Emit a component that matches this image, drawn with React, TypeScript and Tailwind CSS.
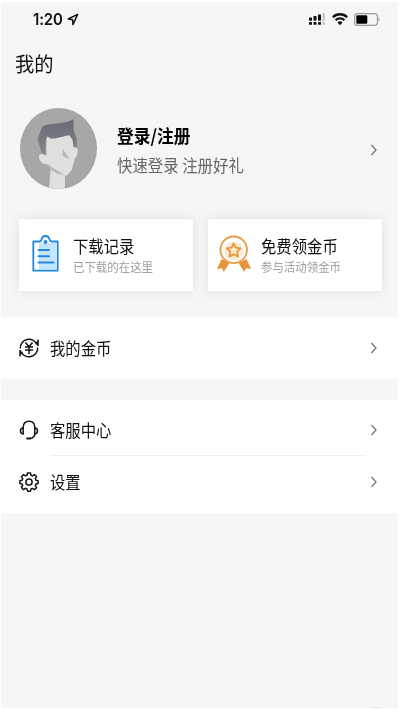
import type { ReactNode } from "react"

function Chevron() {
  return (
    <svg className="h-3 w-2 shrink-0" viewBox="0 0 8 12" fill="none" stroke="#777" strokeWidth="1.3">
      <path d="M1.4 1 6 6 1.4 11" />
    </svg>
  )
}

function StatusBar() {
  return (
    <div className="flex h-[34px] items-center justify-between pr-[18px] pl-8">
      <div className="flex items-center">
        <span className="w-[33px] origin-left scale-x-[0.93] font-[Inter,sans-serif] text-[16px] leading-5 font-semibold tracking-[-0.1px]">
          1:20
        </span>
        <svg className="ml-[1px] h-[13px] w-3" viewBox="0 0 12 13" fill="none" stroke="#111" strokeWidth="1.5" strokeLinejoin="round">
          <path d="M10.6 1.4 1.2 6 5.6 6.8 6 11.6Z" />
        </svg>
      </div>
      <div className="flex items-center">
        <svg className="h-3 w-[17px]" viewBox="0 0 17 12" fill="#111">
          <rect x="0" y="4.5" width="3" height="3.2" rx="0.6" />
          <rect x="4.5" y="3" width="3" height="4.7" rx="0.6" />
          <rect x="9" y="1.4" width="3" height="6.3" rx="0.6" />
          <rect x="0" y="9" width="3" height="2.8" rx="0.6" />
          <rect x="4.5" y="9" width="3" height="2.8" rx="0.6" />
          <rect x="9" y="9" width="3" height="2.8" rx="0.6" />
          <rect x="13.5" y="0" width="2.5" height="7.7" rx="0.6" fill="#c8c8c8" />
          <rect x="13.5" y="9" width="2.5" height="2.8" rx="0.6" fill="#c8c8c8" />
        </svg>
        <svg className="ml-[6px] h-3 w-4" viewBox="0 0 16 12" fill="none" stroke="#111" strokeWidth="2.3">
          <path d="M0.9 4.2a10 10 0 0 1 14.2 0" />
          <path d="M3.6 7.3a6.2 6.2 0 0 1 8.8 0" />
          <path d="M8 12.2 5.4 9.6a3.6 3.6 0 0 1 5.2 0Z" fill="#111" stroke="none" />
        </svg>
        <svg className="ml-[6px] h-[13px] w-[26px]" viewBox="0 0 26 13">
          <rect x="0.6" y="0.6" width="22.8" height="11.8" rx="3" fill="none" stroke="#999" strokeWidth="1.1" />
          <rect x="2.3" y="2.2" width="11" height="8.6" rx="1.4" fill="#000" />
          <path d="M24.4 4.3c1.6.7 1.6 3.7 0 4.4Z" fill="#999" />
        </svg>
      </div>
    </div>
  )
}

function Avatar() {
  return (
    <svg className="h-[81px] w-[77px] shrink-0" viewBox="0 0 77 81" preserveAspectRatio="none">
      <defs>
        <clipPath id="avatar">
          <ellipse cx="38.5" cy="40.5" rx="38.5" ry="40.5" />
        </clipPath>
        <linearGradient id="hair" x1="0" y1="0" x2="0" y2="1">
          <stop offset="0" stopColor="#686a71" />
          <stop offset="1" stopColor="#84868e" />
        </linearGradient>
        <filter id="grain" x="0" y="0" width="1" height="1">
          <feTurbulence type="fractalNoise" baseFrequency="0.45" numOctaves="2" seed="4" />
          <feColorMatrix values="0 0 0 0 0.35  0 0 0 0 0.35  0 0 0 0 0.35  0.7 0 0 0 -0.22" />
        </filter>
      </defs>
      <g clipPath="url(#avatar)">
        <rect width="77" height="81" fill="#a8a8a8" />
        <rect width="77" height="81" filter="url(#grain)" />
        <path
          d="M26.5 28 30.700 30.500 49.500 26.500 53.500 32V39.500C56 38.500 57.800 39.500 57.800 42.500 57.800 46 56.500 49 54.800 50.500L51.700 62 47.500 67.300 45 67.800V81H29L30.700 59.500 26.500 56.300C22 56 19 52.500 19 48.500 19 46.500 21 45.500 23.500 46.300L26.500 48Z"
          fill="#e0e0de"
        />
        <path
          d="M21.5 45 17.500 31 22.500 18.500 26 16.700 40 15.300C45 14.700 50 13 53.500 11.300L53.700 22.500 56.800 31V40L53.500 38.500 52.500 32 49.500 27.300C44 27.700 37 31.300 30.500 30.500L27.500 28.300 25.500 33 25.500 47Z"
          fill="url(#hair)"
        />
        <path d="M26.5 55.500 45 67.500 38 66 31.500 62.500Z" fill="#b9b9b8" />
        <path d="M42.800 41 42.500 48 50 51.500Z" fill="#b8b8b8" />
      </g>
    </svg>
  )
}

function ClipboardIcon() {
  return (
    <svg className="h-[37px] w-[27px] shrink-0" viewBox="0 0 27 37" fill="none" stroke="#2187e0" strokeWidth="1.8" strokeLinejoin="round">
      <path d="M7 8h17v26.500H7Z" fill="#c5e5ff" stroke="none" />
      <path d="M1.300 6.500H7.300C9.300 6.500 9.300 5 9.700 3.800 10.300 2 11.700 1 13.500 1s3.200 1 3.800 2.800c.4 1.200.4 2.700 2.400 2.700h6v29.200H1.300Z" />
      <circle cx="13.500" cy="7" r="1.900" fill="#2187e0" stroke="none" />
      <path d="M6.500 15h10.500M6.500 21.300h10.500M6.500 27.500h15" strokeWidth="2" strokeLinecap="round" />
    </svg>
  )
}

function MedalIcon() {
  return (
    <svg className="h-[37px] w-[34px] shrink-0" viewBox="0 0 34 37">
      <path d="M4.500 24 0 34l5-.8 1.800 3.800L12.500 28ZM29.500 24l4.500 10-5-.8-1.800 3.800L21.500 28Z" fill="#e5943b" />
      <circle cx="16.700" cy="14.800" r="13.300" fill="#fff" stroke="#e89c48" strokeWidth="1.800" />
      <circle cx="17" cy="16" r="9.500" fill="#fbe9d3" />
      <path
        d="m16.700 8.300 2.100 4.300 4.700.7-3.400 3.400.8 4.900-4.200-2.300-4.200 2.300.8-4.900-3.400-3.400 4.700-.7Z"
        fill="#fde9d0"
        stroke="#e69436"
        strokeWidth="1.700"
        strokeLinejoin="round"
      />
    </svg>
  )
}

function CoinIcon() {
  return (
    <svg className="h-5 w-5 shrink-0" viewBox="0 0 20 20" fill="none" stroke="#151515" strokeWidth="1.400">
      <path d="M1.300 10.500A8.700 8.700 0 0 1 18 6.600M18.700 9.500A8.700 8.700 0 0 1 2 13.400" />
      <path d="M1 18.500v-6.500M19 1.500V8" />
      <path d="M.8 12V17.500l3-2.500M19.200 8V2.500l-3 2.500" fill="#151515" stroke="none" />
      <path d="m6.500 4.500 3.500 4.300 3.500-4.300M6 8.900h8M6 11.900h8M10 8.800V16" strokeWidth="1.500" />
    </svg>
  )
}

function HeadsetIcon() {
  return (
    <svg className="h-5 w-5 shrink-0" viewBox="0 0 20 20" fill="none" stroke="#151515" strokeWidth="1.500" strokeLinecap="round">
      <path d="M4.200 13.800V7.500C4.200 3.500 6.500 1.200 10 1.200s5.800 2.300 5.800 6.300v6.300c0 2.700-1.800 4.200-4.300 4.600" />
      <path d="M4.200 7.800C2.500 8 1.500 9.400 1.500 10.900s1 2.800 2.700 3M15.800 7.800c1.700.2 2.700 1.600 2.700 3.100s-1 2.800-2.700 3" />
      <path d="M8.200 18.500h3" strokeWidth="2" />
    </svg>
  )
}

function GearIcon() {
  return (
    <svg className="h-5 w-5 shrink-0" viewBox="0 0 20 20" fill="none" stroke="#151515" strokeWidth="1.500" strokeLinejoin="round">
      <path d="M8.500 1h3l.5 2.300 1.500.6 2-1.300 2.100 2.100-1.300 2 .6 1.500 2.200.5v2.900l-2.200.5-.6 1.500 1.300 2-2.100 2.100-2-1.300-1.500.6-.5 2.200h-3L8 16.900l-1.500-.6-2 1.300-2.100-2.100 1.300-2-.6-1.500-2.200-.5V8.700l2.200-.5.6-1.500-1.300-2 2.100-2.100 2 1.300L8 3.300Z" />
      <circle cx="10" cy="10.100" r="3.100" />
    </svg>
  )
}

function Card({ icon, title, note }: { icon: ReactNode; title: string; note: string }) {
  return (
    <div className="flex h-[72px] w-[174px] bg-white pt-[15px] shadow-[0_0_10px_rgba(0,0,0,0.1)]">
      <div className="flex w-[53.5px] shrink-0 justify-center pt-px">{icon}</div>
      <div className="whitespace-nowrap">
        <div className="origin-left scale-x-[0.93] text-[16.5px] leading-6 text-[#111]">{title}</div>
        <div className="origin-left scale-x-[0.93] text-[12.3px] leading-[18px] text-[#a0a0a0]">{note}</div>
      </div>
    </div>
  )
}

function MenuRow({ icon, label }: { icon: ReactNode; label: string }) {
  return (
    <div className="flex items-center pr-[20px] pl-[18px]">
      {icon}
      <span className="ml-[11px] flex-1 origin-left scale-x-[0.93] text-[16.5px] leading-6">{label}</span>
      <Chevron />
    </div>
  )
}

export default function App() {
  return (
    <div className="relative h-[710px] w-[400px] overflow-hidden border-t-2 border-r-2 border-b-2 border-l border-white bg-[#f6f6f6] font-['Noto_Sans_CJK_SC',sans-serif] text-[#111]">
      <StatusBar />

      <h1 className="mt-[12px] origin-left scale-x-[0.94] pl-[15px] text-[20.5px] leading-[30px]">我的</h1>

      {/* Profile */}
      <div className="mt-[30px] flex items-center pr-[20px] pl-[19px]">
        <Avatar />
        <div className="mt-[2px] ml-[20px] flex-1 whitespace-nowrap">
          <div className="origin-left scale-x-[0.93] text-[18px] leading-[30px] font-bold text-black">登录/注册</div>
          <div className="origin-left scale-x-[0.93] text-[16.6px] leading-[30px] text-[#666]">快速登录 注册好礼</div>
        </div>
        <div className="mt-[2px]">
          <Chevron />
        </div>
      </div>

      {/* Shortcuts */}
      <div className="mt-[30px] flex gap-[14.5px] pl-[18px]">
        <Card icon={<ClipboardIcon />} title="下载记录" note="已下载的在这里" />
        <Card icon={<MedalIcon />} title="免费领金币" note="参与活动领金币" />
      </div>

      <div className="mt-[26px] flex h-[62px] flex-col justify-center bg-white">
        <MenuRow icon={<CoinIcon />} label="我的金币" />
      </div>

      <div className="mt-[21px] h-[113px] bg-white pt-[18px]">
        <MenuRow icon={<HeadsetIcon />} label="客服中心" />
        <div className="mt-[13px] mr-[32px] mb-[14px] ml-[49px] h-px bg-[#eee]" />
        <MenuRow icon={<GearIcon />} label="设置" />
      </div>

      {/* Floating button, mostly below the fold */}
      <div className="absolute -bottom-[29px] left-[361px] size-[30px] rounded-full bg-[#cfe9d8]" />
    </div>
  )
}
